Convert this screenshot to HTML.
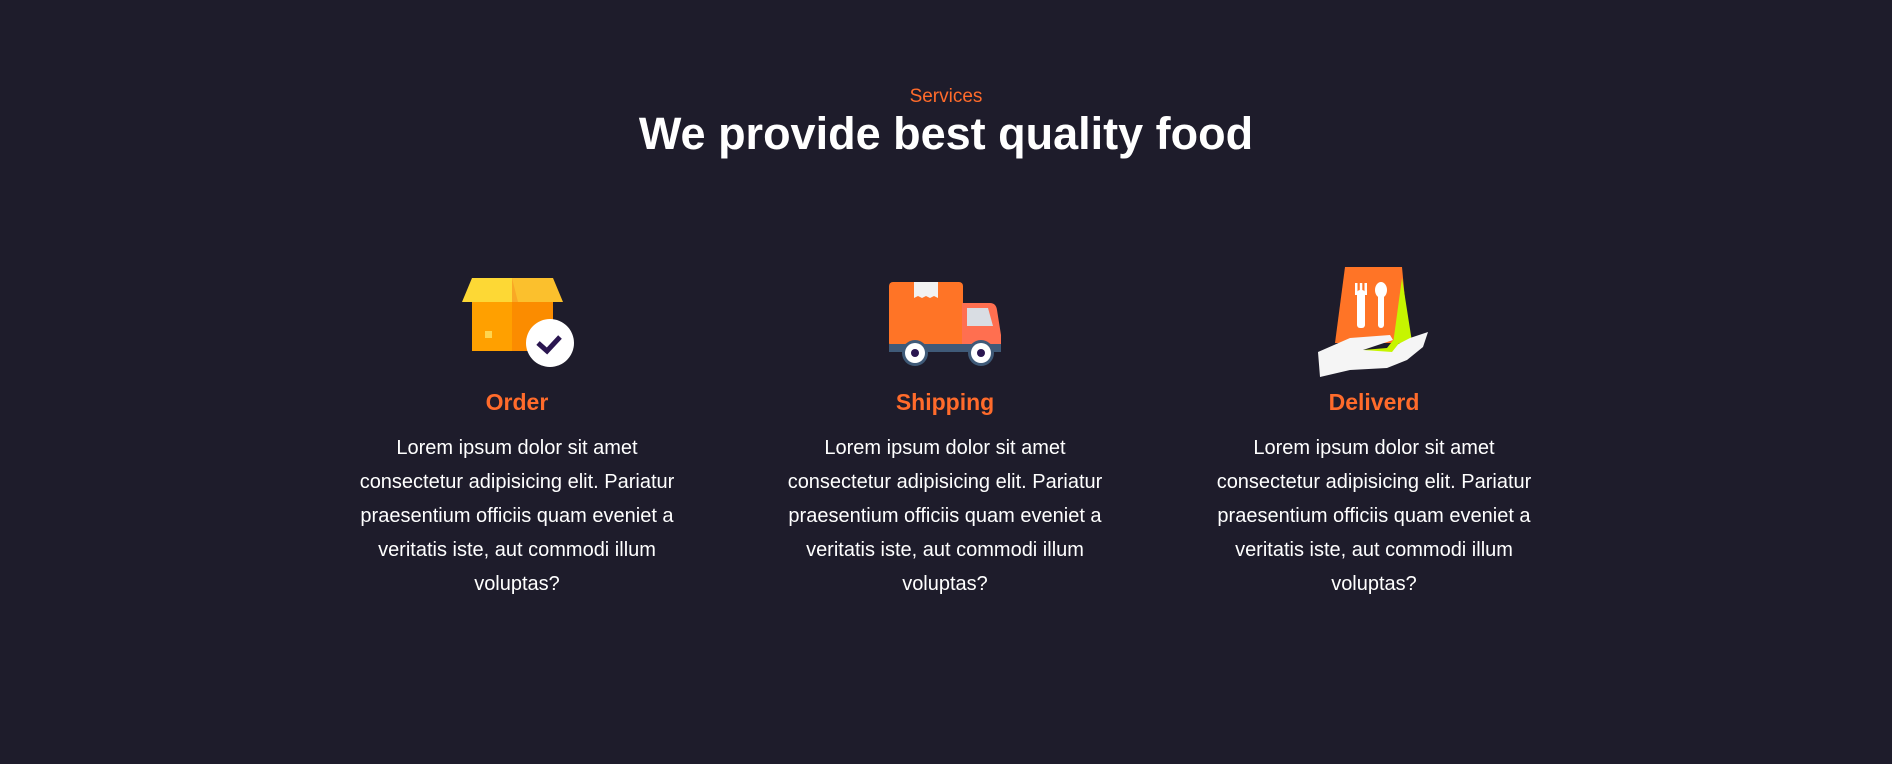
<!DOCTYPE html>
<html><head><meta charset="utf-8"><style>
html,body{margin:0;padding:0}
body{width:1892px;height:764px;background:#1e1c2b;position:relative;overflow:hidden;font-family:"Liberation Sans",Arial,sans-serif;}
.sub{position:absolute;top:86px;left:0;width:1892px;text-align:center;color:#ff6b2b;font-size:19px;}
h1{position:absolute;top:108px;left:0;width:1892px;margin:0;text-align:center;color:#fff;font-size:45px;font-weight:bold;}
.col{position:absolute;top:388px;width:340px;text-align:center;}
.col h3{margin:0;color:#ff6b2b;font-size:23px;font-weight:bold;height:43px;line-height:28px;}
.col p{margin:0;color:#fff;font-size:20px;line-height:34px;white-space:nowrap;}
svg{position:absolute;left:0;top:0}
</style></head><body>
<div class="sub">Services</div>
<h1>We provide best quality food</h1>
<svg width="1892" height="764">
<polygon points="472,278 512,278 512,302 462,302" fill="#fdd835"/>
<polygon points="512,278 553,278 563,302 512,302" fill="#fbc02d"/>
<polygon points="512,278 518,302 512,302" fill="#f9a825"/>
<rect x="472" y="302" width="40" height="49" fill="#ffa000"/>
<rect x="512" y="302" width="41" height="49" fill="#fb8c00"/>
<rect x="485" y="331" width="7" height="7" fill="#ffd54f"/>
<circle cx="550" cy="343" r="24" fill="#fff"/>
<polyline points="538,343 547,351 560,337" fill="none" stroke="#2a1650" stroke-width="5"/>
<rect x="889" y="282" width="74" height="65" rx="4" fill="#ff7426"/>
<polygon points="914,282 938,282 938,298 934,296 930,298 926,296 922,298 918,296 914,298" fill="#f2f2f2"/>
<path d="M962 303 H990 Q996 303 997 310 L1001 335 V347 H962 Z" fill="#ff6f50"/>
<polygon points="967,308 988,308 993,326 967,326" fill="#d9dde3"/>
<rect x="889" y="344" width="112" height="8" fill="#3f5a78"/>
<circle cx="915" cy="353" r="13" fill="#3f5a78"/>
<circle cx="981" cy="353" r="13" fill="#3f5a78"/>
<circle cx="915" cy="353" r="10" fill="#fff"/>
<circle cx="981" cy="353" r="10" fill="#fff"/>
<circle cx="915" cy="353" r="4" fill="#2a1650"/>
<circle cx="981" cy="353" r="4" fill="#2a1650"/>
<polygon points="1345,267 1402,267 1409,343 1335,343" fill="#ff7426"/>
<polygon points="1402,278 1412,342 1393,344" fill="#c6f500"/>
<rect x="1357" y="290" width="8" height="38" rx="3" fill="#fff"/>
<rect x="1355" y="283" width="2.5" height="12" fill="#fff"/>
<rect x="1359.8" y="283" width="2.5" height="12" fill="#fff"/>
<rect x="1364.5" y="283" width="2.5" height="12" fill="#fff"/>
<ellipse cx="1381" cy="290" rx="6" ry="8" fill="#fff"/>
<rect x="1378" y="292" width="6" height="36" rx="3" fill="#fff"/>
<polygon points="1318,352 1350,338 1390,335 1393,340 1363,350 1387,350 1410,338 1428,332 1423,347 1407,360 1387,368 1350,370 1320,377" fill="#f5f5f5"/>
<polygon points="1363,350 1387,348 1395,338 1400,342 1392,352" fill="#c6f500"/>
</svg>
<div class="col" style="left:347px"><h3>Order</h3><p>Lorem ipsum dolor sit amet<br>consectetur adipisicing elit. Pariatur<br>praesentium officiis quam eveniet a<br>veritatis iste, aut commodi illum<br>voluptas?</p></div>
<div class="col" style="left:775px"><h3>Shipping</h3><p>Lorem ipsum dolor sit amet<br>consectetur adipisicing elit. Pariatur<br>praesentium officiis quam eveniet a<br>veritatis iste, aut commodi illum<br>voluptas?</p></div>
<div class="col" style="left:1204px"><h3>Deliverd</h3><p>Lorem ipsum dolor sit amet<br>consectetur adipisicing elit. Pariatur<br>praesentium officiis quam eveniet a<br>veritatis iste, aut commodi illum<br>voluptas?</p></div>
</body></html>
